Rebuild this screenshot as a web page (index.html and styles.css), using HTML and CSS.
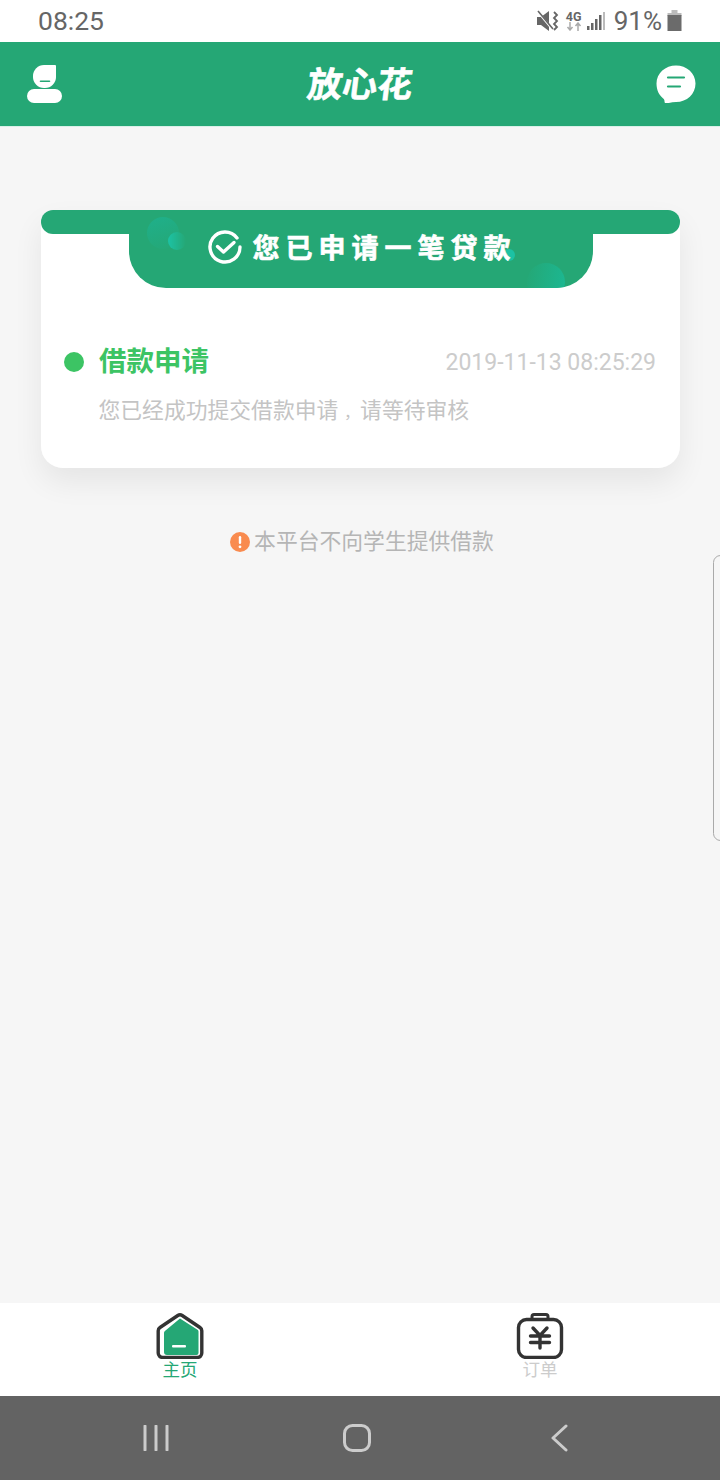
FILE: index.html
```html
<!DOCTYPE html>
<html lang="zh-CN">
<head>
<meta charset="UTF-8" />
<meta name="viewport" content="width=device-width, initial-scale=1" />
<title>放心花</title>
<link rel="stylesheet" href="styles.css">
</head>
<body>
  <div class="app">
    <!-- status bar -->
    <div class="statusbar">
      <span class="clock">08:25</span>
      <div class="status-right">
        <svg class="ic-mute" width="24" height="24" viewBox="0 0 24 24">
          <path d="M1 8h4l8-6v20l-8-6H1z" fill="#666"/>
          <path d="M2 3l15 18" stroke="#fff" stroke-width="2"/>
          <path d="M2 2l15 18" stroke="#666" stroke-width="1.6"/>
          <path d="M18 3l3 3-3 3 3 3-3 3 3 3-3 3" fill="none" stroke="#666" stroke-width="1.8"/>
        </svg>
        <div class="net">
          <span class="net-label">4G</span>
          <svg width="16" height="9" viewBox="0 0 16 9">
            <path d="M4 0v7M1.500 5l2.500 3 2.500-3M12 9V2M9.500 4l2.500-3 2.500 3" fill="none" stroke="#aaa" stroke-width="1.500"/>
          </svg>
        </div>
        <svg width="20" height="20" viewBox="0 0 20 20">
          <rect x="1" y="15" width="2.500" height="4" fill="#666"/>
          <rect x="5" y="12" width="2.500" height="7" fill="#666"/>
          <rect x="9" y="8" width="2.500" height="11" fill="#666"/>
          <rect x="13" y="4" width="2.500" height="15" fill="#666"/>
          <rect x="17" y="1" width="2" height="18" fill="#bbb"/>
        </svg>
        <span class="battery-text">91%</span>
        <svg width="15" height="22" viewBox="0 0 15 22">
          <rect x="4.500" y="0" width="6" height="3" fill="#bbb"/>
          <rect x="0.500" y="3" width="14" height="3" fill="#bbb"/>
          <rect x="0.500" y="5" width="14" height="16" fill="#6b6b6b"/>
        </svg>
      </div>
    </div>

    <!-- header -->
    <header class="topbar">
      <svg width="36" height="38" viewBox="0 0 36 38">
        <path d="M17 0H28a1 1 0 0 1 1 1V12A11 11 0 0 1 18 23H17A11 11 0 0 1 6 12V11A11 11 0 0 1 17 0z" fill="#fff"/>
        <path d="M13.500 16.300h9" stroke="#25a775" stroke-width="1.600" stroke-linecap="round"/>
        <rect x="0" y="24" width="35" height="14" rx="7" fill="#fff"/>
      </svg>
      <span class="brand">放心花</span>
      <svg width="40" height="38" viewBox="0 0 40 38">
        <path d="M20 0.500c10.500 0 19.500 7.500 19.500 18S31 37 20 37c-3 0-6 .6-9 1.500-1.500.3-2.500-.5-2.500-2 .1-1.200-.3-2.200-1.300-3C3 30 .5 25 .5 18.500.5 8 9.500.5 20 .5z" fill="#fff"/>
        <path d="M12 12.500h16M12 21.500h12" stroke="#25a775" stroke-width="2.200" stroke-linecap="round"/>
      </svg>
    </header>

    <main class="content">
      <section class="card">
        <div class="card-strip"></div>
        <div class="banner">
          <span class="bubble bubble-a"></span>
          <span class="bubble bubble-b"></span>
          <span class="bubble bubble-c"></span>
          <span class="bubble bubble-d"></span>
          <svg class="banner-check" width="34" height="34" viewBox="0 0 34 34">
            <path d="M29 8A15 15 0 1 0 32 17" fill="none" stroke="#fff" stroke-width="3.400" stroke-linecap="round"/>
            <path d="M9.500 16.500l6 5.500 10.500-9.500" fill="none" stroke="#fff" stroke-width="3.400" stroke-linecap="round" stroke-linejoin="round"/>
          </svg>
          <span class="banner-text">您已申请一笔贷款</span>
        </div>
        <div class="step">
          <div class="step-head">
            <span class="dot"></span>
            <span class="step-title">借款申请</span>
            <span class="step-time">2019-11-13 08:25:29</span>
          </div>
          <p class="step-desc">您已经成功提交借款申请<span class="comma">，</span>请等待审核</p>
        </div>
      </section>

      <div class="notice">
        <svg width="20" height="20" viewBox="0 0 20 20">
          <circle cx="10" cy="10" r="10" fill="#f98b4f"/>
          <rect x="8.800" y="4" width="2.400" height="8" rx="1.200" fill="#fff"/>
          <circle cx="10" cy="14.800" r="1.400" fill="#fff"/>
        </svg>
        <span>本平台不向学生提供借款</span>
      </div>
    </main>

    <div class="side-handle"></div>

    <!-- tabs -->
    <nav class="tabbar">
      <a class="tab tab-on">
        <svg width="48" height="46" viewBox="0 0 48 46">
          <path d="M21.800 2.500a4 4 0 0 1 4.400 0L44 14.500a4 4 0 0 1 1.800 3.300V40a4.500 4.500 0 0 1-4.500 4.500H6.700A4.500 4.500 0 0 1 2.200 40V17.800A4 4 0 0 1 4 14.500z" fill="#fff" stroke="#333" stroke-width="3.400" stroke-linejoin="round"/>
          <path d="M24 5.500l17.500 11.300a2 2 0 0 1 1 1.700V40a2 2 0 0 1-2 2H11a3 3 0 0 1-3-3V20c0-1 .5-2 1.500-2.600z" fill="#25a775"/>
          <rect x="16" y="32" width="14" height="2.500" rx="1" fill="#fff"/>
        </svg>
        <span>主页</span>
      </a>
      <a class="tab">
        <svg width="48" height="46" viewBox="0 0 48 46">
          <path d="M16 7V3.500A2 2 0 0 1 18 1.500h12A2 2 0 0 1 32 3.500V7" fill="none" stroke="#333" stroke-width="3"/>
          <rect x="2.500" y="6.500" width="43" height="38" rx="8" fill="#fff" stroke="#333" stroke-width="3.400"/>
          <path d="M17 15l7 7.500 7-7.500M14.500 23h19M14.500 29.500h19M24 23v12" fill="none" stroke="#333" stroke-width="3.400" stroke-linecap="round"/>
        </svg>
        <span>订单</span>
      </a>
    </nav>

    <!-- android nav -->
    <div class="sysnav">
      <svg width="26" height="26" viewBox="0 0 26 26">
        <path d="M2 1v24M13 1v24M24 1v24" stroke="#ccc" stroke-width="3" stroke-linecap="round"/>
      </svg>
      <svg class="nav-home" width="28" height="28" viewBox="0 0 28 28">
        <rect x="1.500" y="1.500" width="25" height="25" rx="8" fill="none" stroke="#ccc" stroke-width="3"/>
      </svg>
      <svg class="nav-back" width="18" height="28" viewBox="0 0 18 28">
        <path d="M16 2L3 14l13 12" fill="none" stroke="#ccc" stroke-width="3" stroke-linecap="round" stroke-linejoin="round"/>
      </svg>
    </div>
  </div>
</body>
</html>
```

FILE: styles.css
```css
* {
  box-sizing: border-box;
}
body {
  margin: 0;
  font-family: Roboto, "Noto Sans CJK SC", sans-serif;
  background: #f6f6f6;
}
.app {
  position: relative;
  width: 720px;
  height: 1480px;
  display: flex;
  flex-direction: column;
  overflow: hidden;
}

/* status bar */
.statusbar {
  height: 42px;
  background: #fff;
  color: #666;
  display: flex;
  justify-content: space-between;
  align-items: center;
  padding: 0 38px;
}
.clock {
  font-size: 26.500px;
  margin-bottom: 1px;
}
.status-right {
  display: flex;
  align-items: center;
}
.ic-mute {
  margin-right: 5px;
}
.net {
  display: flex;
  flex-direction: column;
  align-items: center;
  width: 18px;
  margin-right: 3px;
}
.net-label {
  font-size: 12.500px;
  line-height: 11px;
  font-weight: 700;
}
.battery-text {
  font-size: 26px;
  margin: 0 5px 0 8px;
}

/* header */
.topbar {
  height: 85px;
  background: #25a775;
  border-bottom: 1px solid #d9f0e8;
  display: flex;
  justify-content: space-between;
  align-items: center;
  padding: 0 24px 0 27px;
}
.brand {
  color: #fff;
  font-size: 35px;
  font-weight: 700;
  transform: skewX(-7deg);
  -webkit-text-stroke: 0.6px #fff;
  margin: 0 0 6px 2px;
}

/* main */
.content {
  flex: 1;
  background: #f6f6f6;
  padding: 83px 40px 0 41px;
}
.card {
  position: relative;
  height: 258px;
  background: linear-gradient(#fff, #fff) 0 12px no-repeat;
  border-radius: 12px 12px 22px 22px;
  box-shadow: 0 14px 30px rgba(0, 0, 0, 0.07);
}
.card-strip {
  height: 24px;
  background: #25a775;
  border-radius: 12px;
}
.banner {
  position: relative;
  width: 464px;
  height: 78px;
  margin: -24px auto 0;
  background: #25a775;
  border-radius: 0 0 37px 37px;
  overflow: hidden;
  display: flex;
  align-items: center;
  color: #fff;
  padding: 0 0 5px 79px;
}
.banner-check {
  flex: none;
  position: relative;
  margin-right: 11px;
}
.banner-text {
  position: relative;
  font-size: 27px;
  font-weight: 700;
  letter-spacing: 6px;
  -webkit-text-stroke: 0.6px #fff;
  white-space: nowrap;
}
.bubble {
  position: absolute;
  border-radius: 50%;
}
.bubble-a {
  left: 18px;
  top: 7px;
  width: 32px;
  height: 32px;
  background: linear-gradient(160deg, #1fb08b, #25a775);
}
.bubble-b {
  left: 39px;
  top: 22px;
  width: 18px;
  height: 18px;
  background: linear-gradient(90deg, #1cc2a4, #25a775);
}
.bubble-c {
  left: 374px;
  top: 39px;
  width: 12px;
  height: 12px;
  background: #1cc2a4;
}
.bubble-d {
  left: 398px;
  top: 53px;
  width: 38px;
  height: 38px;
  background: linear-gradient(100deg, #25a775, #1bb893);
}
.step {
  padding: 56px 24px 0 23px;
}
.step-head {
  display: flex;
  align-items: center;
}
.dot {
  width: 20px;
  height: 20px;
  border-radius: 50%;
  background: #3cc464;
  margin-right: 15px;
}
.step-title {
  color: #3cc464;
  font-size: 27.500px;
  font-weight: 700;
  line-height: 36px;
}
.step-time {
  margin-left: auto;
  color: #ccc;
  font-size: 23px;
}
.step-desc {
  margin: 15px 0 0 34.500px;
  color: #c4c4c4;
  font-size: 21.800px;
  line-height: 32px;
  white-space: nowrap;
}
.comma {
  display: inline-block;
  font-size: 16px;
  padding-left: 5.800px;
}
.notice {
  display: flex;
  align-items: center;
  justify-content: center;
  gap: 4px;
  margin: 58px 0 0 3px;
  color: #b5b5b5;
  font-size: 21.800px;
  line-height: 32px;
}

/* edge panel handle */
.side-handle {
  position: absolute;
  right: -8px;
  top: 555px;
  width: 15px;
  height: 286px;
  border: 1px solid #aaa;
  border-radius: 8px;
}

/* tabs */
.tabbar {
  height: 93px;
  background: #fff;
  display: flex;
}
.tab {
  flex: 1;
  display: flex;
  flex-direction: column;
  align-items: center;
  padding-top: 10px;
  color: #ccc;
  font-size: 17.500px;
  line-height: 20px;
}
.tab svg {
  margin-bottom: 1px;
}
.tab-on {
  color: #25a775;
}

.sysnav {
  height: 84px;
  background: #636363;
  display: flex;
  align-items: center;
  padding-left: 143px;
}
.nav-home {
  margin-left: 174px;
}
.nav-back {
  margin-left: 179px;
}
```
